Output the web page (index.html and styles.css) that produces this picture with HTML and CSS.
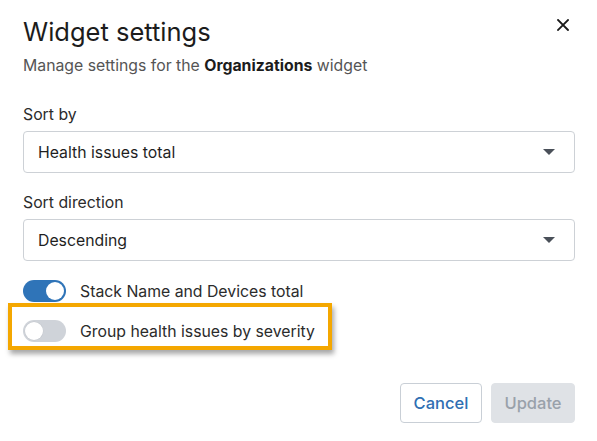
FILE: index.html
```html
<!DOCTYPE html>
<html lang="en">
<head>
<meta charset="utf-8">
<title>Widget settings</title>
<link rel="stylesheet" href="styles.css">
</head>
<body>
<div class="dialog">
  <div class="header">
    <h1 class="title">Widget settings</h1>
    <button class="close" aria-label="Close">
      <svg width="12" height="12" viewBox="0 0 12 12"><path d="M1 1 L11 11 M11 1 L1 11" stroke="#1a1a1a" stroke-width="1.8" stroke-linecap="square"/></svg>
    </button>
  </div>
  <p class="subtitle">Manage settings for the <b>Organizations</b> widget</p>

  <div class="field first">
    <label class="label">Sort by</label>
    <div class="select"><span>Health issues total</span><span class="caret"></span></div>
  </div>
  <div class="field">
    <label class="label">Sort direction</label>
    <div class="select"><span>Descending</span><span class="caret"></span></div>
  </div>

  <div class="toggles">
    <div class="toggle-row">
      <span class="switch on"><span class="knob"></span></span>
      <span class="toggle-label">Stack Name and Devices total</span>
    </div>
    <div class="toggle-row">
      <span class="switch"><span class="knob"></span></span>
      <span class="toggle-label">Group health issues by severity</span>
      <span class="highlight"></span>
    </div>
  </div>

  <div class="footer">
    <button class="btn cancel">Cancel</button>
    <button class="btn update">Update</button>
  </div>
</div>
</body>
</html>
```

FILE: styles.css
```css
* { box-sizing: border-box; }
html, body { margin: 0; padding: 0; background: #fff; }
body {
  font-family: Inter, "Noto Sans", "Liberation Sans", sans-serif;
  color: #2b2b2b;
  width: 597px;
  height: 441px;
  overflow: hidden;
}
.dialog {
  padding: 17px 22px 0 23px;
  display: flex;
  flex-direction: column;
}
.header {
  display: flex;
  justify-content: space-between;
  align-items: flex-start;
}
.title {
  margin: 0;
  font-size: 25.5px;
  font-weight: 400;
  line-height: 30px;
  color: #1c1c1c;
}
.close {
  border: 0;
  background: none;
  padding: 0;
  margin: 2px 6px 0 0;
  width: 12px;
  height: 12px;
  cursor: pointer;
  display: flex;
}
.subtitle {
  margin: 8px 0 0 0;
  font-size: 15.8px;
  line-height: 22px;
  color: #555;
}
.subtitle b { color: #1c1c1c; font-weight: 700; }
.field { display: flex; flex-direction: column; }
.field.first { margin-top: 27px; }
.field + .field { margin-top: 19px; }
.label {
  font-size: 15.8px;
  line-height: 22px;
  color: #2b2b2b;
  margin-bottom: 5px;
}
.select {
  height: 42px;
  border: 1px solid #cdd1d6;
  border-radius: 4px;
  display: flex;
  align-items: center;
  justify-content: space-between;
  padding: 0 19px 0 14px;
  font-size: 15.8px;
  color: #1f1f1f;
}
.caret {
  width: 0; height: 0;
  border-left: 6px solid transparent;
  border-right: 6px solid transparent;
  border-top: 6px solid #4a5059;
}
.toggles {
  display: flex;
  flex-direction: column;
  gap: 18px;
  margin-top: 19px;
}
.toggle-row {
  display: flex;
  align-items: center;
  gap: 14px;
  position: relative;
  height: 22px;
}
.switch {
  width: 43px;
  height: 22px;
  border-radius: 11px;
  background: #cfd3d9;
  position: relative;
  display: inline-block;
  flex: none;
}
.switch .knob {
  position: absolute;
  top: 2px;
  left: 2px;
  width: 18px;
  height: 18px;
  border-radius: 50%;
  background: #fff;
  box-shadow: 0 0 0 0.5px #c4c8ce;
}
.switch.on { background: #2f74b8; }
.switch.on .knob { left: 23px; box-shadow: none; }
.toggle-label {
  font-size: 15.8px;
  color: #2b2b2b;
}
.highlight {
  position: absolute;
  left: -15px;
  top: -17px;
  width: 324px;
  height: 47px;
  border: 4px solid #f4a700;
  box-shadow: 2px 4px 5px rgba(0,0,0,0.35);
  pointer-events: none;
}
.footer {
  display: flex;
  justify-content: flex-end;
  gap: 9px;
  margin-top: 41px;
}
.btn {
  height: 40px;
  border-radius: 4px;
  font-family: inherit;
  font-size: 16.5px;
  font-weight: 500;
  padding: 0;
}
.cancel {
  width: 82px;
  background: #fff;
  border: 1px solid #c9cfd6;
  color: #2f6fb3;
}
.update {
  width: 84px;
  background: #dfe2e6;
  border: 1px solid #dfe2e6;
  color: #99a1aa;
}
```
